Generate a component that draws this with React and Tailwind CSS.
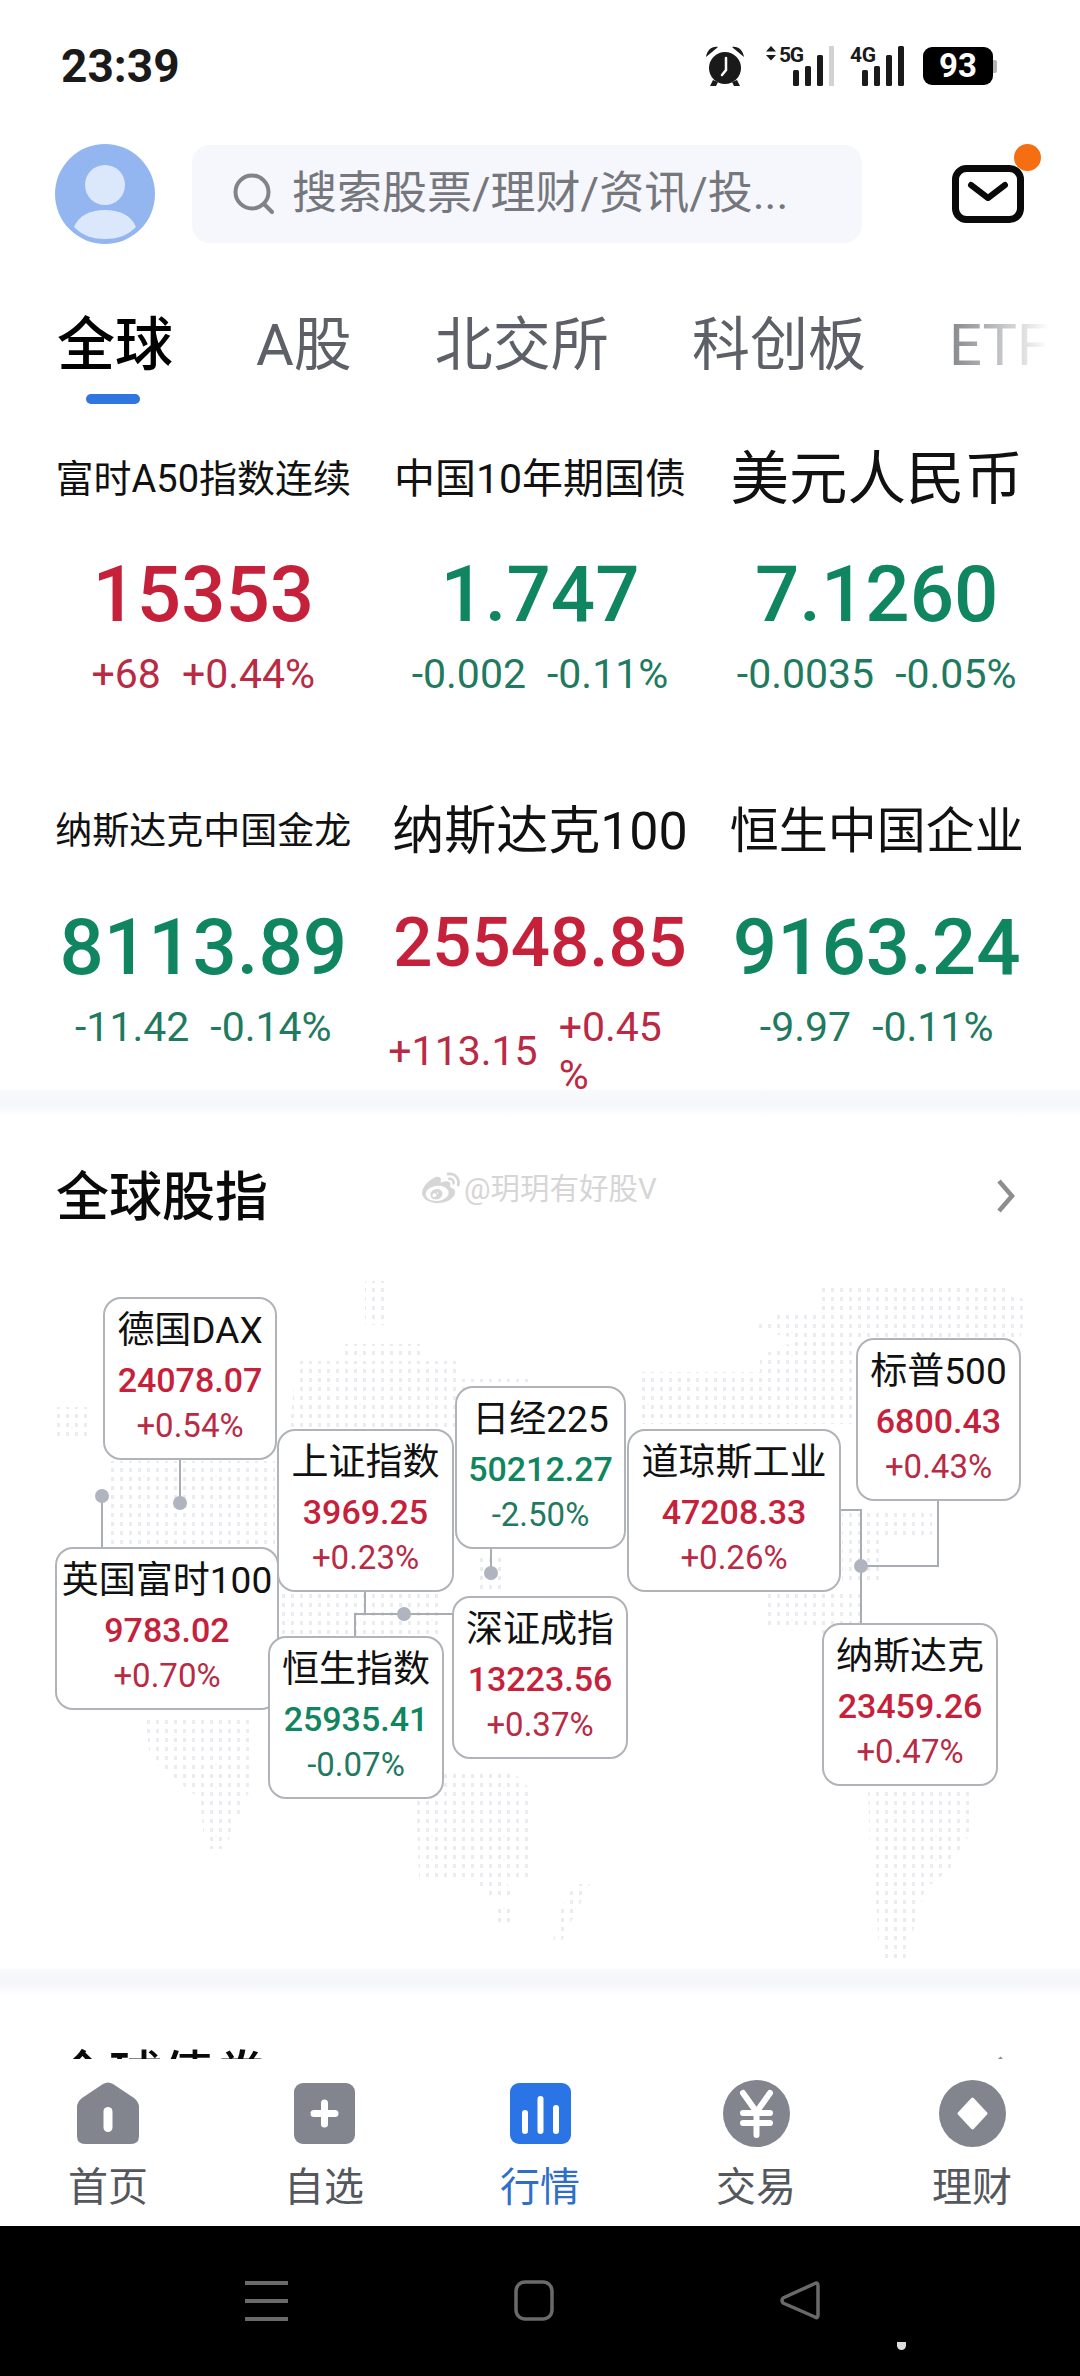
import { FaWeibo } from "react-icons/fa";

const RED = "text-[#c6213b]";
const GREEN = "text-[#0f8560]";

const quotes = [
  { name: "富时A50指数连续", size: "text-[38px]", value: "15353", vsize: "text-[78px]", up: true, diff: "+68", pct: "+0.44%" },
  { name: "中国10年期国债", size: "text-[41px]", value: "1.747", vsize: "text-[78px]", up: false, diff: "-0.002", pct: "-0.11%" },
  { name: "美元人民币", size: "text-[58.5px]", value: "7.1260", vsize: "text-[78px]", up: false, diff: "-0.0035", pct: "-0.05%" },
  { name: "纳斯达克中国金龙", size: "text-[37px]", value: "8113.89", vsize: "text-[78px]", up: false, diff: "-11.42", pct: "-0.14%" },
  { name: "纳斯达克100", size: "text-[52px]", value: "25548.85", vsize: "text-[69px]", up: true, diff: "+113.15", pct: "+0.45%", wrap: true },
  { name: "恒生中国企业", size: "text-[49px]", value: "9163.24", vsize: "text-[78px]", up: false, diff: "-9.97", pct: "-0.11%" },
];

// places of the index cards on the map
const nodes = [
  { name: "德国DAX", value: "24078.07", pct: "+0.54%", up: true, pos: "left-[103px] top-[16px] w-[174px]" },
  { name: "英国富时100", value: "9783.02", pct: "+0.70%", up: true, pos: "left-[55px] top-[266px] w-[224px]" },
  { name: "上证指数", value: "3969.25", pct: "+0.23%", up: true, pos: "left-[277px] top-[148px] w-[177px]" },
  { name: "恒生指数", value: "25935.41", pct: "-0.07%", up: false, pos: "left-[268px] top-[355px] w-[176px]" },
  { name: "日经225", value: "50212.27", pct: "-2.50%", up: false, pos: "left-[455px] top-[105px] w-[171px]" },
  { name: "深证成指", value: "13223.56", pct: "+0.37%", up: true, pos: "left-[452px] top-[315px] w-[176px]" },
  { name: "道琼斯工业", value: "47208.33", pct: "+0.26%", up: true, pos: "left-[627px] top-[148px] w-[214px]" },
  { name: "标普500", value: "6800.43", pct: "+0.43%", up: true, pos: "left-[856px] top-[57px] w-[165px]" },
  { name: "纳斯达克", value: "23459.26", pct: "+0.47%", up: true, pos: "left-[822px] top-[342px] w-[176px]" },
];

// rough continents, filled with the dot pattern
const land = [
  "55,1408 92,1408 92,1438 55,1438",
  "105,1462 275,1462 275,1548 105,1548",
  "145,1716 250,1716 250,1790 225,1850 205,1850 200,1800 150,1760",
  "365,1282 388,1282 388,1326 365,1326",
  "344,1345 425,1345 425,1360 344,1360",
  "296,1362 460,1362 460,1380 530,1380 530,1430 290,1430",
  "282,1593 442,1593 442,1640 282,1640",
  "475,1559 505,1559 505,1592 475,1592",
  "415,1770 510,1770 530,1790 528,1878 505,1878 512,1896 488,1896 470,1878 419,1878",
  "495,1908 515,1908 515,1925 495,1925",
  "575,1885 590,1885 570,1925 562,1942 553,1942 560,1910",
  "637,1373 760,1373 760,1357 800,1340 750,1330 785,1312 822,1312 822,1285 1000,1285 1030,1305 1020,1340 856,1340 856,1425 637,1425",
  "842,1510 932,1510 932,1538 885,1538 885,1582 842,1582",
  "762,1594 860,1594 860,1680 820,1680 820,1630 762,1630",
  "868,1792 972,1792 972,1830 950,1870 925,1890 905,1960 880,1965 876,1900 870,1850",
];

function AlarmIcon() {
  return (
    <svg width="40" height="42" viewBox="0 0 40 42">
      <circle cx="20" cy="23" r="16" fill="#1a1a1a" />
      <path d="M1 12 C2 5 7 1 13 2 Z M39 12 C38 5 33 1 27 2 Z" fill="#1a1a1a" />
      <path d="M8 35 L5 41 L11 41 L13 37 Z M32 35 L35 41 L29 41 L27 37 Z" fill="#1a1a1a" />
      <path d="M21 13 L21 25 L17 30" fill="none" stroke="#fff" strokeWidth="2.5" strokeLinecap="round" />
    </svg>
  );
}

function Signal5G() {
  return (
    <svg width="70" height="42" viewBox="0 0 70 42" className="overflow-visible">
      <path d="M0 6.5 L5 1 L10 6.5 Z M0 10 L10 10 L5 15.5 Z" fill="#1a1a1a" />
      <text x="13" y="17" fontFamily="Roboto" fontWeight="700" fontSize="21" textLength="25" fill="#1a1a1a">5G</text>
      <rect x="27" y="25" width="6" height="16" rx="1.5" fill="#1a1a1a" />
      <rect x="39" y="21" width="6" height="20" rx="1.5" fill="#1a1a1a" />
      <rect x="51" y="10" width="6" height="31" rx="1.5" fill="#1a1a1a" />
      <rect x="63" y="1" width="5" height="40" fill="#d2d2d2" />
    </svg>
  );
}

function Signal4G() {
  return (
    <svg width="56" height="42" viewBox="0 0 56 42" className="overflow-visible">
      <text x="0" y="17" fontFamily="Roboto" fontWeight="700" fontSize="21" textLength="26" fill="#1a1a1a">4G</text>
      <rect x="12" y="25" width="6" height="16" rx="1.5" fill="#1a1a1a" />
      <rect x="24" y="21" width="6" height="20" rx="1.5" fill="#1a1a1a" />
      <rect x="36" y="10" width="6" height="31" rx="1.5" fill="#1a1a1a" />
      <rect x="48" y="1" width="6" height="40" rx="1.5" fill="#1a1a1a" />
    </svg>
  );
}

function Avatar() {
  return (
    <svg width="100" height="100" viewBox="0 0 100 100" className="shrink-0">
      <circle cx="50" cy="50" r="50" fill="#94b6f0" />
      <circle cx="50" cy="41" r="20" fill="#dbe8fb" />
      <path d="M19 83 C24 71 36 66 50 66 C64 66 76 71 81 83 C72 92 62 95 50 95 C38 95 28 92 19 83 Z" fill="#dbe8fb" />
    </svg>
  );
}

function MailIcon() {
  return (
    <div className="relative w-[72px] h-[58px] ml-[90px] shrink-0">
      <svg width="72" height="58" viewBox="0 0 72 58">
        <rect x="3.5" y="3.5" width="65" height="51" rx="11" fill="#fff" stroke="#0a0a0a" strokeWidth="7" />
        <path d="M19 20 L36 33 L53 20" fill="none" stroke="#0a0a0a" strokeWidth="6" strokeLinecap="round" strokeLinejoin="round" />
      </svg>
      <span className="absolute left-[62px] top-[-21px] w-[27px] h-[27px] rounded-full bg-[#f56f12]" />
    </div>
  );
}

function QuoteCell({ q }) {
  const color = q.up ? RED : GREEN;
  return (
    <div className="flex flex-col items-center">
      <div className={`h-[78px] leading-[78px] whitespace-nowrap text-[#111] ${q.size}`}>{q.name}</div>
      <div className={`h-[78px] leading-[78px] font-medium whitespace-nowrap ${q.wrap ? "mt-[33px]" : "mt-[38px]"} ${q.vsize} ${color}`}>
        {q.value}
      </div>
      {q.wrap ? (
        <div className="flex items-center gap-[21px] mt-[21px] text-[41px] leading-[48px] text-[#b92a44]">
          <span className="whitespace-nowrap">{q.diff}</span>
          <span className="w-[133px]">
            {q.pct.slice(0, -1)}
            <br />
            %
          </span>
        </div>
      ) : (
        <div className={`flex items-center gap-[21px] mt-[16px] text-[41px] leading-[48px] ${q.up ? "text-[#b92a44]" : "text-[#1f7a5f]"}`}>
          <span className="whitespace-nowrap">{q.diff}</span>
          <span className="whitespace-nowrap">{q.pct}</span>
        </div>
      )}
    </div>
  );
}

function NodeCard({ node }) {
  return (
    <div className={`absolute h-[163px] pt-[9px] flex flex-col items-center bg-white border-2 border-[#b0b3b8] rounded-[18px] ${node.pos}`}>
      <div className="h-[46px] leading-[46px] text-[37px] text-[#111] whitespace-nowrap">{node.name}</div>
      <div className={`h-[46px] mt-[3px] leading-[46px] text-[34px] font-medium whitespace-nowrap ${node.up ? RED : GREEN}`}>{node.value}</div>
      <div className={`h-[46px] leading-[46px] text-[33px] whitespace-nowrap ${node.up ? "text-[#b92a44]" : "text-[#1f7a5f]"}`}>{node.pct}</div>
    </div>
  );
}

function MapBackdrop() {
  return (
    <svg className="absolute left-0 top-0" width="1080" height="688" viewBox="0 1282 1080 688">
      <defs>
        <pattern id="dots" x="0" y="0" width="9" height="9" patternUnits="userSpaceOnUse">
          <rect x="3" y="2" width="3" height="4" fill="#eaecf0" />
        </pattern>
      </defs>
      {land.map((pts) => (
        <polygon key={pts} points={pts} fill="url(#dots)" />
      ))}
      <g fill="none" stroke="#a9adb3" strokeWidth="2">
        <path d="M102 1497 V1548" />
        <path d="M180 1460 V1504" />
        <path d="M491 1550 V1574" />
        <path d="M365 1592 V1615 M355 1637 V1615 H452" />
        <path d="M841 1511 H861 V1624 M861 1567 H938 V1501" />
      </g>
      <g fill="#b0b4bf">
        <circle cx="102" cy="1497" r="7" />
        <circle cx="180" cy="1504" r="7" />
        <circle cx="491" cy="1574" r="7" />
        <circle cx="404" cy="1615" r="7" />
        <circle cx="861" cy="1567" r="7" />
      </g>
    </svg>
  );
}

function Chevron() {
  return (
    <svg width="20" height="34" viewBox="0 0 20 34" className="shrink-0">
      <path d="M3 2 L16 17 L3 32" fill="none" stroke="#8d8d8d" strokeWidth="4.5" />
    </svg>
  );
}

function Band() {
  return <div className="h-[27px] shrink-0 bg-gradient-to-b from-[#f9fafc] via-[#f5f6f9] to-white" />;
}

function NavItem({ icon, label, active }) {
  return (
    <div className="flex flex-col items-center w-[216px]">
      <div className="h-[64px] flex items-center justify-center">{icon}</div>
      <div className={`mt-[19px] h-[48px] leading-[48px] text-[40px] ${active ? "text-[#2f6fc8]" : "text-[#55575d]"}`}>{label}</div>
    </div>
  );
}

const GRAY = "#82858e";

const navItems = [
  {
    label: "首页",
    icon: (
      <svg width="62" height="62" viewBox="0 0 62 62">
        <path d="M26 2 Q31 -1 36 2 L57 16 Q62 20 62 25 V54 Q62 62 54 62 H8 Q0 62 0 54 V25 Q0 20 5 16 Z" fill={GRAY} />
        <rect x="26.5" y="25" width="9" height="25" rx="4.5" fill="#fff" />
      </svg>
    ),
  },
  {
    label: "自选",
    icon: (
      <svg width="61" height="61" viewBox="0 0 61 61">
        <rect width="61" height="61" rx="9" fill={GRAY} />
        <path d="M30.5 20 V41 M20 30.5 H41" stroke="#fff" strokeWidth="7" strokeLinecap="round" />
      </svg>
    ),
  },
  {
    label: "行情",
    active: true,
    icon: (
      <svg width="61" height="61" viewBox="0 0 61 61">
        <rect width="61" height="61" rx="9" fill="#2b74e6" />
        <path d="M15 30 V48 M30.5 16 V48 M46 25 V48" stroke="#fff" strokeWidth="6" strokeLinecap="round" />
      </svg>
    ),
  },
  {
    label: "交易",
    icon: (
      <svg width="67" height="67" viewBox="0 0 67 67">
        <circle cx="33.5" cy="33.5" r="33.5" fill={GRAY} />
        <path d="M20 13 L33.5 32 L47 13 M33.5 32 V55 M20 33 H47 M20 43 H47" fill="none" stroke="#fff" strokeWidth="6" strokeLinecap="round" strokeLinejoin="round" />
      </svg>
    ),
  },
  {
    label: "理财",
    icon: (
      <svg width="67" height="67" viewBox="0 0 67 67">
        <circle cx="33.5" cy="33.5" r="33.5" fill={GRAY} />
        <path d="M33.5 19 L47 33.5 L33.5 48 L20 33.5 Z" fill="#fff" stroke="#fff" strokeWidth="3" strokeLinejoin="round" />
      </svg>
    ),
  },
];

export default function App() {
  return (
    <div className="w-[1080px] h-[2376px] flex flex-col overflow-hidden bg-white font-[Roboto,'Noto_Sans_CJK_SC',sans-serif]">
      {/* status bar */}
      <div className="h-[126px] shrink-0 pl-[61px] pr-[83px] pt-[6px] flex items-center justify-between">
        <span className="text-[46px] font-bold text-[#1a1a1a] leading-none">23:39</span>
        <div className="flex items-center">
          <AlarmIcon />
          <div className="ml-[21px]"><Signal5G /></div>
          <div className="ml-[14px]"><Signal4G /></div>
          <div className="ml-[17px] w-[70px] h-[38px] rounded-[9px] bg-black text-white text-[33px] font-bold leading-[38px] text-center">93</div>
          <div className="w-[4px] h-[13px] bg-[#b5b5b5] rounded-r-[2px]" />
        </div>
      </div>

      {/* search row */}
      <div className="h-[100px] shrink-0 mt-[18px] pl-[55px] flex items-center">
        <Avatar />
        <div className="ml-[37px] w-[670px] h-[98px] rounded-[18px] bg-[#f5f7fc] flex items-center pl-[41px]">
          <svg width="42" height="42" viewBox="0 0 42 42" className="shrink-0">
            <circle cx="19" cy="19" r="16.5" fill="none" stroke="#808388" strokeWidth="4" />
            <path d="M31 31 L39 39" stroke="#808388" strokeWidth="4" strokeLinecap="round" />
          </svg>
          <span className="ml-[17px] text-[45px] text-[#75777d] whitespace-nowrap">搜索股票/理财/资讯/投...</span>
        </div>
        <MailIcon />
      </div>

      {/* tabs */}
      <div className="h-[196px] shrink-0 pt-[6px] pl-[57px] flex items-center gap-[83px] text-[58px] text-[#5e6068] whitespace-nowrap">
        <div className="relative font-medium text-black leading-[58px]">
          全球
          <span className="absolute left-[29px] top-[78px] w-[54px] h-[10px] rounded-full bg-[#2f76e0]" />
        </div>
        <div>A股</div>
        <div>北交所</div>
        <div>科创板</div>
        <div className="w-[100px] overflow-hidden bg-gradient-to-r from-[#85878d] to-white bg-clip-text text-transparent">ETF</div>
      </div>

      {/* quotes */}
      <div className="h-[650px] shrink-0 px-[35px] grid grid-cols-3 grid-rows-[353px_297px]">
        {quotes.map((q) => (
          <QuoteCell key={q.name} q={q} />
        ))}
      </div>
      <Band />

      {/* global indices */}
      <div className="relative h-[164px] shrink-0 pl-[56px] pr-[64px] flex items-center justify-between">
        <span className="text-[53px] font-medium text-[#0a0a0a]">全球股指</span>
        <div className="absolute left-[421px] top-[50px] flex items-center gap-[3px] text-[#d6d6d6] text-[29.5px] leading-[44px] whitespace-nowrap">
          <FaWeibo className="w-[40px] h-[38px]" />
          <span>@玥玥有好股V</span>
        </div>
        <div className="-mt-[6px]"><Chevron /></div>
      </div>
      <div className="relative h-[688px] shrink-0">
        <MapBackdrop />
        {nodes.map((node) => (
          <NodeCard key={node.name} node={node} />
        ))}
      </div>
      <Band />

      {/* next section, cut off by the tab bar */}
      <div className="h-[63px] shrink-0 overflow-hidden pl-[56px] pr-[64px] pt-[51px] flex items-start justify-between">
        <span className="text-[53px] leading-[60px] font-medium text-[#0a0a0a] shrink-0">全球债券</span>
        <div className="mt-[9px]"><Chevron /></div>
      </div>

      {/* tab bar */}
      <div className="h-[167px] shrink-0 pt-[22px] flex bg-white">
        {navItems.map((item) => (
          <NavItem key={item.label} {...item} />
        ))}
      </div>

      {/* android nav */}
      <div className="relative flex-1 bg-black pl-[245px] pt-[54px] flex items-start gap-[226px]">
        <svg width="43" height="42" viewBox="0 0 43 42">
          <path d="M0 3 H43 M0 21 H43 M0 39 H43" stroke="#6a6a6a" strokeWidth="4" />
        </svg>
        <svg width="40" height="41" viewBox="0 0 40 41">
          <rect x="2" y="2" width="36" height="37" rx="9" fill="none" stroke="#6a6a6a" strokeWidth="3.5" />
        </svg>
        <svg width="40" height="41" viewBox="0 0 40 41">
          <path d="M36 3 Q38 3 38 6 V35 Q38 39 35 37 L3 23 Q1 20.5 3 18 Z" fill="none" stroke="#6a6a6a" strokeWidth="3.5" strokeLinejoin="round" />
        </svg>
        <span className="absolute left-[897px] top-[116px] w-[9px] h-[8px] rounded-b-full bg-[#dddddd]" />
      </div>
    </div>
  );
}
